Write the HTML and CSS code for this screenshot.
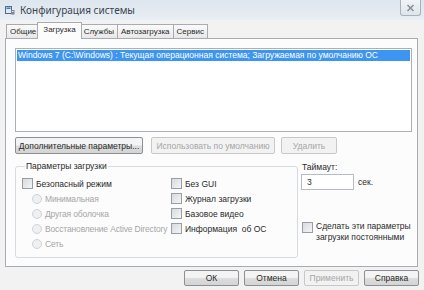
FILE: index.html
```html
<!DOCTYPE html>
<html lang="ru">
<head>
    <meta charset="UTF-8">
    <title>Конфигурация системы</title>
    <link rel="stylesheet" href="styles.css">
</head>
<body>
    <div class="window">
        <div class="titlebar">
            <svg class="app-icon" width="10" height="10" viewBox="0 0 10 10">
                <rect x="0.5" y="1.5" width="6" height="7" fill="#dfe7f0" stroke="#5a6a80"/>
                <rect x="1.5" y="2.5" width="4" height="1.5" fill="#3a78c8"/>
                <rect x="6" y="5" width="3.5" height="4.5" fill="#7a8696"/>
                <rect x="7" y="6" width="1.5" height="1" fill="#e8eef4"/>
            </svg>
            <span class="title">Конфигурация системы</span>
            <div class="close">
                <svg width="9" height="8" viewBox="0 0 9 8">
                    <path d="M1.5 1 L7.5 7 M7.5 1 L1.5 7" stroke="#8a9098" stroke-width="1.6"/>
                </svg>
            </div>
        </div>

        <div class="tabs">
            <div class="tab">Общие</div>
            <div class="tab active">Загрузка</div>
            <div class="tab">Службы</div>
            <div class="tab">Автозагрузка</div>
            <div class="tab">Сервис</div>
        </div>

        <div class="panel">
            <div class="listbox">
                <div class="item selected">Windows 7 (C:\Windows) : Текущая операционная система; Загружаемая по умолчанию ОС</div>
            </div>

            <div class="btn-row">
                <button class="btn btn-advanced">Дополнительные параметры...</button>
                <button class="btn btn-default" disabled>Использовать по умолчанию</button>
                <button class="btn btn-delete" disabled>Удалить</button>
            </div>

            <div class="lower">
                <fieldset class="group">
                    <legend>Параметры загрузки</legend>
                    <div class="group-cols">
                        <div class="col col-left">
                            <div class="row"><span class="checkbox"></span>Безопасный режим</div>
                            <div class="row sub disabled"><span class="radio"></span>Минимальная</div>
                            <div class="row sub disabled"><span class="radio"></span>Другая оболочка</div>
                            <div class="row sub disabled"><span class="radio"></span>Восстановление Active Directory</div>
                            <div class="row sub disabled"><span class="radio"></span>Сеть</div>
                        </div>
                        <div class="col col-right">
                            <div class="row"><span class="checkbox"></span>Без GUI</div>
                            <div class="row"><span class="checkbox"></span>Журнал загрузки</div>
                            <div class="row"><span class="checkbox"></span>Базовое видео</div>
                            <div class="row"><span class="checkbox"></span>Информация&nbsp; об ОС</div>
                        </div>
                    </div>
                </fieldset>

                <div class="side">
                    <div class="side-label">Таймаут:</div>
                    <div class="timeout-row">
                        <input class="timeout" type="text" value="3">
                        <span>сек.</span>
                    </div>
                    <div class="permanent">
                        <span class="checkbox"></span>
                        <span>Сделать эти параметры<br>загрузки постоянными</span>
                    </div>
                </div>
            </div>
        </div>

        <div class="footer">
            <button class="btn btn-foot">ОК</button>
            <button class="btn btn-foot">Отмена</button>
            <button class="btn btn-foot" disabled>Применить</button>
            <button class="btn btn-foot">Справка</button>
        </div>
    </div>
</body>
</html>
```

FILE: styles.css
```css
body {
    margin: 0;
    font-family: "Liberation Sans", Arial, sans-serif;
    font-size: 8.5px;
    color: #2a2a2a;
    background: #f2f2f2;
}
.window {
    width: 424px;
    height: 290px;
    background: #f2f2f2;
    overflow: hidden;
}
.titlebar {
    height: 20px;
    display: flex;
    align-items: center;
    background: linear-gradient(#dde5ee, #e9eef3);
}
.app-icon {
    margin-left: 5px;
    margin-right: 5px;
}
.title {
    font-family: "Noto Sans", sans-serif;
    font-size: 10px;
    color: #3a4450;
    flex: 1;
    margin-top: -1px;
}
.close {
    align-self: flex-start;
    width: 19px;
    height: 15px;
    margin-right: 3px;
    border: 1px solid #a9b2bc;
    border-top: none;
    border-radius: 0 0 3px 3px;
    background: linear-gradient(#f1f4f7, #dfe5ea);
    display: flex;
    align-items: center;
    justify-content: center;
}
.tabs {
    display: flex;
    align-items: flex-end;
    margin: 2px 0 0 6px;
    height: 16px;
    position: relative;
    z-index: 1;
    font-size: 8px;
}
.tab {
    height: 13px;
    line-height: 13px;
    padding: 0 3px;
    border: 1px solid #a8acb2;
    border-bottom: none;
    margin-right: -1px;
    background: linear-gradient(#fafafa, #e8e8e8);
    white-space: nowrap;
}
.tab.active {
    height: 16px;
    line-height: 14px;
    padding: 0 5px;
    margin: 0 0 -1px -2px;
    background: #fcfcfc;
    position: relative;
    z-index: 2;
}
.tab.active + .tab {
    margin-left: -2px;
}
.panel {
    margin: 0 6px 0 5px;
    border: 1px solid #a8acb2;
    background: #fcfcfc;
    padding: 9px 5px 0 9px;
    box-sizing: border-box;
    height: 229px;
}
.listbox {
    height: 84px;
    border: 1px solid #a9b0b6;
    background: #fff;
    padding: 1px;
    box-sizing: border-box;
}
.item {
    height: 11px;
    line-height: 11px;
    padding-left: 1px;
    white-space: nowrap;
    overflow: hidden;
}
.item.selected {
    background: #3d95f2;
    color: #fff;
}
.btn {
    font-family: inherit;
    font-size: 8.5px;
    color: #2a2a2a;
    height: 17px;
    padding: 0;
    white-space: nowrap;
    border: 1px solid #8c8f94;
    border-radius: 2px;
    background: linear-gradient(#f4f4f4 45%, #dcdcdc 55%, #d4d4d4);
}
.btn:disabled {
    color: #a6a6a6;
    border-color: #c8c8c8;
    background: #f2f2f2;
}
.btn-row {
    display: flex;
    margin-top: 5px;
}
.btn-advanced {
    width: 128px;
}
.btn-default {
    width: 124px;
    margin-left: 8px;
}
.btn-delete {
    width: 56px;
    margin-left: 6px;
}
.lower {
    display: flex;
    margin-top: 7px;
}
.group {
    margin: 0;
    padding: 5px 0 0 6px;
    width: 283px;
    height: 97px;
    box-sizing: border-box;
    border: 1px solid #d6dbe0;
    border-radius: 3px;
}
.group legend {
    padding: 0 1px;
    margin-left: 3px;
    line-height: 10px;
}
.group-cols {
    display: flex;
}
.col-left {
    width: 149px;
}
.row {
    display: flex;
    align-items: center;
    height: 15px;
    white-space: nowrap;
}
.row.sub {
    padding-left: 10px;
    letter-spacing: -0.15px;
}
.disabled {
    color: #a6a6a6;
}
.checkbox {
    width: 9px;
    height: 9px;
    margin-right: 3px;
    flex-shrink: 0;
    border: 1px solid #9a9ea4;
    background: linear-gradient(135deg, #d8dadd, #f4f5f6);
}
.radio {
    width: 8px;
    height: 8px;
    margin-right: 3px;
    flex-shrink: 0;
    border: 1px solid #cfd2d6;
    border-radius: 50%;
    background: #eef0f2;
}
.side {
    margin-left: 4px;
}
.side-label {
    line-height: 12px;
}
.timeout-row {
    display: flex;
    align-items: center;
    margin-top: 1px;
}
.timeout {
    width: 53px;
    height: 16px;
    box-sizing: border-box;
    border: 1px solid #b5bcc4;
    font-family: inherit;
    font-size: 8.5px;
    padding: 0 5px;
    margin: 0 4px 0 -1px;
    color: #2a2a2a;
}
.permanent {
    display: flex;
    margin-top: 31px;
    line-height: 11px;
    white-space: nowrap;
}
.permanent .checkbox {
    margin-top: 1px;
}
.footer {
    display: flex;
    justify-content: flex-end;
    gap: 5px;
    margin: 3px 5px 0 0;
}
.btn-foot {
    width: 55px;
    height: 16px;
}
```
